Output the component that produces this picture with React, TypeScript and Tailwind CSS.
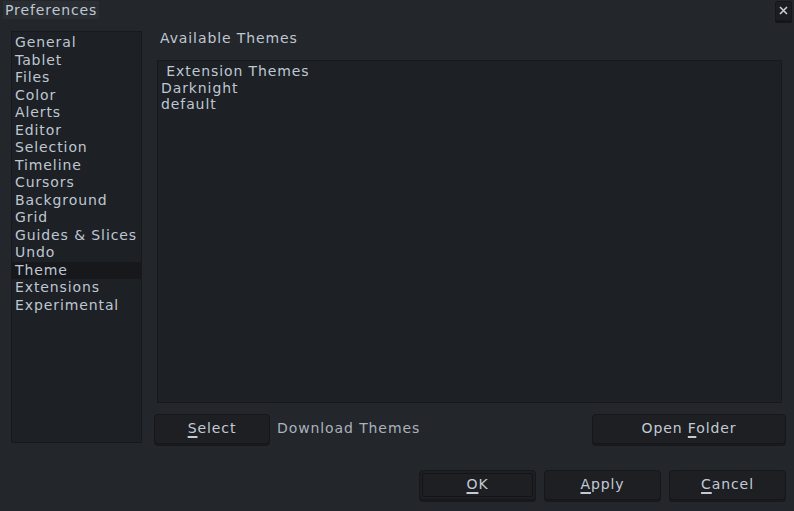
import React from 'react';

const sections = [
  'General',
  'Tablet',
  'Files',
  'Color',
  'Alerts',
  'Editor',
  'Selection',
  'Timeline',
  'Cursors',
  'Background',
  'Grid',
  'Guides & Slices',
  'Undo',
  'Theme',
  'Extensions',
  'Experimental',
];

// label with one underlined mnemonic letter
function Mnemonic({ text, at = 0 }: { text: string; at?: number }) {
  return (
    <span>
      {text.slice(0, at)}
      <span className="underline decoration-2 underline-offset-[3px]">{text[at]}</span>
      {text.slice(at + 1)}
    </span>
  );
}

function Button({
  label,
  at,
  className,
  focused,
}: {
  label: string;
  at?: number;
  className: string;
  focused?: boolean;
}) {
  return (
    <button
      className={
        'h-[30px] rounded-[4px] border border-[#15171a] bg-[#1d1f23] shadow-[0_2px_0_#17191c] flex items-center justify-center text-[#c3cad6] ' +
        className
      }
    >
      {focused ? (
        <span className="m-[2px] flex-1 self-stretch rounded-[2px] border border-[#131417] flex items-center justify-center">
          <Mnemonic text={label} at={at} />
        </span>
      ) : (
        <Mnemonic text={label} at={at} />
      )}
    </button>
  );
}

export default function App() {
  return (
    <div
      className="w-[794px] h-[511px] bg-[#23262a] text-[#bfc7d3] text-[14px] tracking-[0.9px] leading-[17.5px] flex flex-col overflow-hidden"
      style={{ fontFamily: '"DejaVu Sans", Verdana, sans-serif' }}
    >
      {/* title bar */}
      <div className="h-[20px] flex items-start justify-between">
        <div className="ml-[3px] mt-[1px] px-[2px] bg-[#2a2d31] leading-[18px]">Preferences</div>
        <div className="mr-[2px] mt-[1px] w-[17px] h-[20px] rounded-[2px] bg-[#1b1d20] border border-[#15171a] shadow-[0_2px_0_#141518] flex items-start justify-center pt-[3px]">
          <svg width="11" height="11" viewBox="0 0 11 11">
            <path d="M2 2 L9 9 M9 2 L2 9" stroke="#c7ced9" strokeWidth="1.6" />
          </svg>
        </div>
      </div>

      {/* body */}
      <div className="flex pl-[11px] pt-[11px] gap-[12px]">
        <div className="w-[131px] h-[412px] bg-[#1d2024] border border-[#17191c] pt-[2px]">
          {sections.map((s) => (
            <div
              key={s}
              className={'pl-[3px] whitespace-nowrap h-[17.5px] ' + (s === 'Theme' ? 'bg-[#17181b]' : '')}
            >
              {s}
            </div>
          ))}
        </div>

        <div className="w-[632px] flex flex-col">
          <div className="pl-[6px] h-[29px] leading-[14px] flex items-start">Available Themes</div>
          <div className="ml-[3px] mr-[4px] h-[343px] bg-[#1d2024] border border-[#17191c] pt-[2px] leading-[16.5px]">
            <div className="pl-[3px] whitespace-pre"> Extension Themes</div>
            <div className="pl-[3px]">Darknight</div>
            <div className="pl-[3px]">default</div>
          </div>
          <div className="mt-[11px] flex items-center">
            <Button label="Select" className="w-[116px]" />
            <span className="ml-[7px] text-[#aab2be]">Download Themes</span>
            <Button label="Open Folder" at={5} className="ml-auto w-[194px]" />
          </div>
        </div>
      </div>

      {/* bottom buttons */}
      <div className="mt-[26px] flex justify-end gap-[8px] pr-[8px]">
        <Button label="OK" className="w-[117px]" focused />
        <Button label="Apply" className="w-[117px]" />
        <Button label="Cancel" className="w-[117px]" />
      </div>
    </div>
  );
}
